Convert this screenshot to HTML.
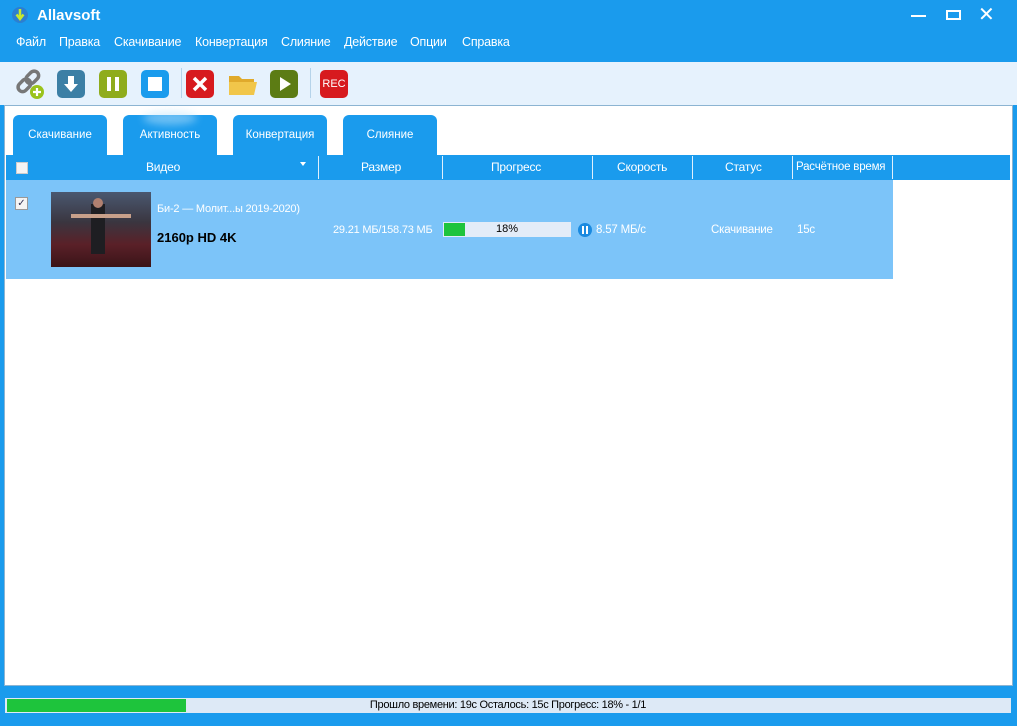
<!DOCTYPE html>
<html><head><meta charset="utf-8"><style>
*{margin:0;padding:0;box-sizing:border-box}
body{width:1017px;height:726px;background:#1a9bed;font-family:"Liberation Sans","DejaVu Sans",sans-serif;position:relative;overflow:hidden}
.abs{position:absolute}
.menu span{position:absolute;top:35px;color:#fff;font-size:12.5px;letter-spacing:-0.2px}
.tb{position:absolute;top:70px;width:28px;height:28px;border-radius:5px}
.tab{position:absolute;top:115px;height:41px;width:94px;background:#1a9bed;border-radius:6px 6px 0 0;color:#fff;font-size:11.5px;text-align:center;line-height:40px}
.hd{position:absolute;top:167px;color:#fff;font-size:12px;transform:translateY(-50%);letter-spacing:-0.2px}
.sep{position:absolute;top:156px;width:1px;height:23px;background:#dff0fd}
.cell{position:absolute;color:#fff;font-size:11.5px;letter-spacing:-0.2px}
</style></head><body>
<div class="abs" style="left:0;top:0;width:1017px;height:62px;background:#1a9bed;border-radius:8px 8px 0 0"></div>
<svg class="abs" style="left:11px;top:6px" width="18" height="18"><circle cx="9" cy="9" r="8" fill="#2c7fd0"/><path d="M9 3v9M5.5 8.5L9 13l3.5-4.5" stroke="#c7e830" stroke-width="2.5" fill="none"/></svg>
<div class="abs" style="left:37px;top:7px;color:#fff;font-weight:bold;font-size:15px">Allavsoft</div>
<div class="abs" style="left:911px;top:15px;width:15px;height:2px;background:#fff"></div>
<div class="abs" style="left:946px;top:10px;width:15px;height:10px;border:2px solid #fff"></div>
<div class="abs" style="left:978px;top:2px;color:#fff;font-size:20px">✕</div>
<div class="menu"><span style="left:16px">Файл</span><span style="left:59px">Правка</span><span style="left:114px">Скачивание</span><span style="left:195px">Конвертация</span><span style="left:281px">Слияние</span><span style="left:344px">Действие</span><span style="left:410px">Опции</span><span style="left:462px">Справка</span></div>
<div class="abs" style="left:0;top:62px;width:1017px;height:43px;background:#e6f2fd"></div>
<svg class="abs" style="left:14px;top:68px" width="32" height="32"><g stroke="#777" stroke-width="3.5" fill="none"><rect x="3" y="13" width="14" height="9" rx="4.5" transform="rotate(-45 10 17)"/><rect x="11" y="5" width="14" height="9" rx="4.5" transform="rotate(-45 18 9)"/></g><circle cx="23" cy="24" r="7" fill="#9ac31c"/><path d="M23 20v8M19 24h8" stroke="#fff" stroke-width="2.2"/></svg>
<div class="tb" style="left:57px;background:#3c7fa5"><svg width="28" height="28"><path d="M11 6h6v8h4l-7 8-7-8h4z" fill="#fff"/></svg></div>
<div class="tb" style="left:99px;background:#8fac1c"><div class="abs" style="left:8px;top:7px;width:4px;height:14px;background:#fff"></div><div class="abs" style="left:16px;top:7px;width:4px;height:14px;background:#fff"></div></div>
<div class="tb" style="left:141px;background:#1a9bed"><div class="abs" style="left:7px;top:7px;width:14px;height:14px;background:#fff"></div></div>
<div class="abs" style="left:181px;top:68px;width:1px;height:30px;background:#b5d3ea"></div>
<div class="tb" style="left:186px;background:#d71a1e"><svg width="28" height="28"><path d="M8 8l12 12M20 8L8 20" stroke="#fff" stroke-width="3.5"/></svg></div>
<svg class="abs" style="left:228px;top:72px" width="30" height="26"><path d="M1 4h10l3 3h12v16H1z" fill="#e0aa2c"/><path d="M1 10h28l-3 13H1z" fill="#f1c64a"/></svg>
<div class="tb" style="left:270px;background:#5c7c14"><svg width="28" height="28"><path d="M10 7l11 7-11 7z" fill="#fff"/></svg></div>
<div class="abs" style="left:310px;top:68px;width:1px;height:30px;background:#b5d3ea"></div>
<div class="tb" style="left:320px;background:#d71a1e;color:#fff;font-size:11px;line-height:28px;text-align:center">REC</div>
<div class="abs" style="left:4px;top:105px;width:1009px;height:581px;background:#fff;border:1px solid #8cb4d2"></div>
<div class="tab" style="left:13px">Скачивание</div>
<div class="tab" style="left:123px">Активность<div class="abs" style="left:20px;top:-4px;width:54px;height:14px;border-radius:50%;background:#bfe4fb;opacity:.5;filter:blur(4px)"></div></div>
<div class="tab" style="left:233px">Конвертация</div>
<div class="tab" style="left:343px">Слияние</div>
<div class="abs" style="left:6px;top:155px;width:1004px;height:25px;background:#1a9bed"></div>
<div class="abs" style="left:16px;top:162px;width:12px;height:12px;background:#f4f4f4;border:1px solid #ccc"></div>
<div class="hd" style="left:146px">Видео</div>
<div class="abs" style="left:300px;top:162px;width:0;height:0;border:3.5px solid transparent;border-top:4px solid #fff"></div>
<div class="sep" style="left:318px"></div><div class="hd" style="left:361px">Размер</div>
<div class="sep" style="left:442px"></div><div class="hd" style="left:491px">Прогресс</div>
<div class="sep" style="left:592px"></div><div class="hd" style="left:617px">Скорость</div>
<div class="sep" style="left:692px"></div><div class="hd" style="left:725px">Статус</div>
<div class="sep" style="left:792px"></div><div class="hd" style="left:796px;font-size:11.5px">Расчётное время</div>
<div class="sep" style="left:892px"></div>
<div class="abs" style="left:6px;top:180px;width:887px;height:99px;background:#7cc4f9"></div>
<div class="abs" style="left:15px;top:197px;width:13px;height:13px;background:#f4f4f4;border:1px solid #999;font-size:10px;line-height:11px;text-align:center;color:#335">✓</div>
<div class="abs" style="left:51px;top:192px;width:100px;height:75px;background:linear-gradient(180deg,#4a5870 0%,#3a3640 40%,#5a2028 70%,#3a1418 100%)"><div class="abs" style="left:40px;top:12px;width:14px;height:50px;background:#1e1e22"></div><div class="abs" style="left:20px;top:22px;width:60px;height:4px;background:#c8a08a"></div><div class="abs" style="left:42px;top:6px;width:10px;height:10px;border-radius:50%;background:#b08070"></div></div>
<div class="cell" style="left:157px;top:203px;font-size:11px">Би-2 — Молит...ы 2019-2020)</div>
<div class="abs" style="left:157px;top:230px;font-size:13px;font-weight:bold;color:#000">2160p HD 4K</div>
<div class="cell" style="left:333px;top:224px;font-size:11px">29.21 МБ/158.73 МБ</div>
<div class="abs" style="left:443px;top:222px;width:128px;height:15px;background:#e3ecf8"><div class="abs" style="left:1px;top:1px;width:21px;height:13px;background:#1ec43c"></div><div class="abs" style="left:0;width:128px;text-align:center;font-size:11px;line-height:15px;color:#000">18%</div></div>
<div class="abs" style="left:578px;top:223px;width:14px;height:14px;border-radius:50%;background:#1a8ae0"><div class="abs" style="left:4px;top:3px;width:2px;height:8px;background:#fff"></div><div class="abs" style="left:8px;top:3px;width:2px;height:8px;background:#fff"></div></div>
<div class="cell" style="left:596px;top:224px">8.57 МБ/с</div>
<div class="cell" style="left:711px;top:224px">Скачивание</div>
<div class="cell" style="left:797px;top:224px">15с</div>
<div class="abs" style="left:5px;top:698px;width:1006px;height:15px;background:#dde9f6"><div class="abs" style="left:2px;top:1px;width:179px;height:13px;background:#1ec43c"></div><div class="abs" style="left:0;width:1006px;text-align:center;font-size:11px;line-height:15px;color:#000;letter-spacing:-0.3px">Прошло времени: 19с Осталось: 15с Прогресс: 18% - 1/1</div></div>
</body></html>
